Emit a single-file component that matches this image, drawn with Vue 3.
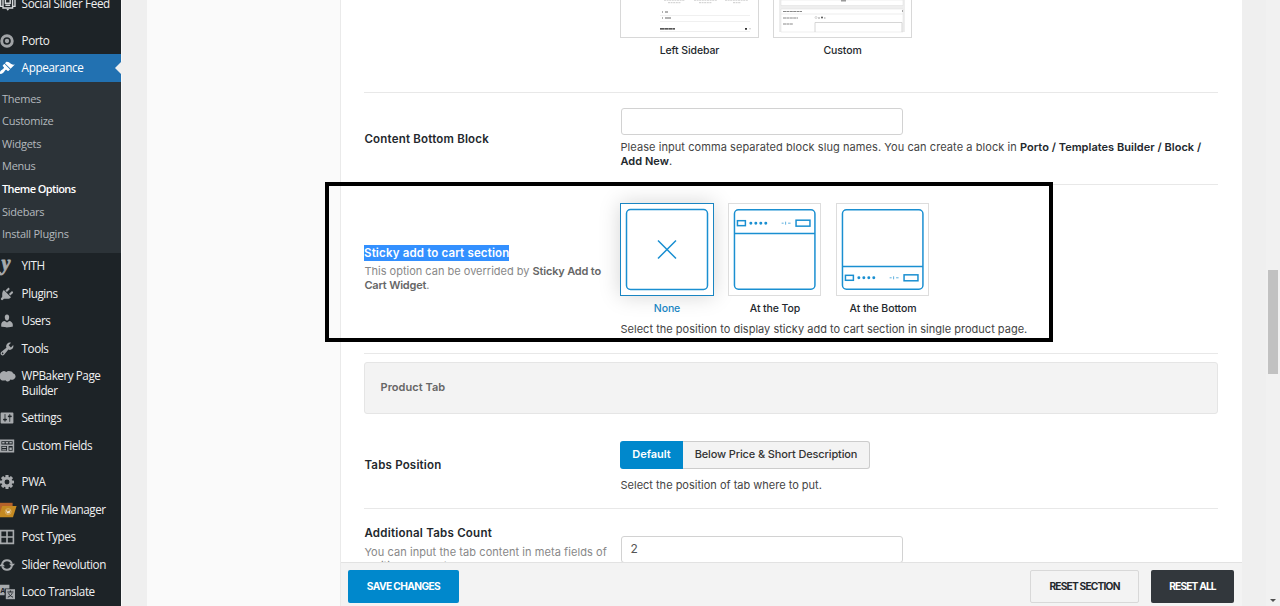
<script setup>
const P = {
  brush: 'M14.48 11.06L7.41 3.99l1.5-1.5c.5-.56 2.3-.47 3.51.32 1.21.8 1.43 1.28 2.91 2.1 1.18.64 2.45 1.26 4.45.85zm-.71.71L6.7 4.7 4.93 6.47c-.39.39-.39 1.02 0 1.41l1.06 1.06c.39.39.39 1.03 0 1.42-.6.6-1.43 1.11-2.21 1.69-.35.26-.7.53-1.01.84C1.43 14.23.4 16.08 1.4 17.07c.99 1 2.84-.03 4.18-1.36.31-.31.58-.66.85-1.02.57-.78 1.08-1.61 1.69-2.21.39-.39 1.02-.39 1.41 0l1.06 1.06c.39.39 1.02.39 1.41 0z',
  plug: 'M13.11 4.36L9.87 7.6 8 5.73l3.24-3.24c.35-.34 1.05-.2 1.56.32.52.51.66 1.21.31 1.55zm-8 1.77l.91-1.12 9.01 9.01-1.19.84c-.71.71-2.63 1.16-3.82 1.16H6.14L4.9 17.26c-.59.59-1.54.59-2.12 0-.59-.58-.59-1.53 0-2.12l1.24-1.24v-3.88c0-1.13.4-3.19 1.09-3.89zm7.26 3.97l3.24-3.24c.34-.35 1.04-.21 1.55.31.52.51.66 1.21.31 1.55l-3.24 3.25z',
  user: 'M10 9.25c-2.27 0-2.73-3.44-2.73-3.44C7 4.02 7.82 2 9.97 2c2.16 0 2.98 2.02 2.71 3.81 0 0-.41 3.44-2.68 3.44zm0 2.57L12.72 10c2.39 0 4.52 2.33 4.52 4.53v2.49s-3.65 1.13-7.24 1.13c-3.65 0-7.24-1.13-7.24-1.13v-2.49c0-2.25 1.94-4.48 4.47-4.48z',
  wrench: 'M16.68 9.77c-1.34 1.34-3.3 1.67-4.95.99l-5.41 6.52c-.99.99-2.59.99-3.58 0s-.99-2.59 0-3.57l6.52-5.42c-.68-1.65-.35-3.61.99-4.95 1.28-1.28 3.12-1.62 4.72-1.06l-2.89 2.89 2.82 2.82 2.86-2.87c.53 1.58.18 3.39-1.08 4.65zM3.81 16.21c.4.39 1.04.39 1.43 0 .4-.4.4-1.04 0-1.43-.39-.4-1.03-.4-1.43 0-.39.39-.39 1.03 0 1.43z',
  sliders: 'M18 16V4c0-.55-.45-1-1-1H3c-.55 0-1 .45-1 1v12c0 .55.45 1 1 1h14c.55 0 1-.45 1-1zM8 11h1c.55 0 1 .45 1 1s-.45 1-1 1H8v1.5c0 .28-.22.5-.5.5s-.5-.22-.5-.5V13H6c-.55 0-1-.45-1-1s.45-1 1-1h1V5.5c0-.28.22-.5.5-.5s.5.22.5.5V11zm5-2h-1c-.55 0-1-.45-1-1s.45-1 1-1h1V5.5c0-.28.22-.5.5-.5s.5.22.5.5V7h1c.55 0 1 .45 1 1s-.45 1-1 1h-1v5.5c0 .28-.22.5-.5.5s-.5-.22-.5-.5V9z',
  clouds: 'M1 8a5 5 0 0 1 8-3 5 5 0 0 1 5-1c2 0 3 1 3.500 2.500a4 4 0 0 1 1 7.500c-1.500 1-3 1-4.500 .5-.5 2.500-4 3.500-6 .8C4 16.500 2 15 1.500 13.500-.8 12-.6 9.500 1 8z',
  fields: 'M1 2h18v16H1zM3 4v4h14V4zM3 10v6h7v-6zM12 10v6h5v-6z M4 5h3v2H4z M8.500 5h3v2h-3z M13 5h3v2h-3z M4 11h5v1.500H4z M4 14h5v1.200H4z M13 12h3v3h-3z',
  grid: 'M1 1h18v18H1zM3 3v6h6V3zM11 3v6h6V3zM3 11v6h6v-6zM11 11v6h6v-6z',
}
const items = [
  { t: 'YITH', k: 'yith' }, { t: 'Plugins', k: 'plug' }, { t: 'Users', k: 'user' }, { t: 'Tools', k: 'wrench' },
  { t: 'WPBakery Page Builder', k: 'clouds', c: 'tall' }, { t: 'Settings', k: 'sliders' }, { t: 'Custom Fields', k: 'fields' },
  { t: 'PWA', k: 'gear', c: 'gap' }, { t: 'WP File Manager', k: 'folder' }, { t: 'Post Types', k: 'grid' },
  { t: 'Slider Revolution', k: 'refresh' }, { t: 'Loco Translate', k: 'loco' },
]
const sub = ['Themes', 'Customize', 'Widgets', 'Menus', 'Theme Options', 'Sidebars', 'Install Plugins']
const teeth = [0, 45, 90, 135, 180, 225, 270, 315]
</script>

<template>
  <div class="page">
    <nav class="side">
      <div class="item first">
        <svg class="ic" viewBox="0 0 20 20" fill="none" stroke="#d5d8da" stroke-width="1.700"><path d="M5 1v14h12V1M2 3v10h3M20 3v10h-3M8 1v8h6V1M8 11.500h6" /><path d="M9 16l2 2.500 2-2.500z" fill="#d5d8da" stroke="none" /></svg>
        <span>Social Slider Feed</span>
      </div>
      <div class="item porto">
        <svg class="ic" viewBox="0 0 20 20" fill="none" stroke="#a0a3a6"><circle cx="10" cy="10" r="6.600" stroke-width="3.600" /><circle cx="10" cy="10" r="2.700" fill="#a0a3a6" stroke="none" /></svg>
        <span>Porto</span>
      </div>
      <div class="item active">
        <svg class="ic" viewBox="0 0 20 20" fill="#fff"><path :d="P.brush" /></svg>
        <span>Appearance</span>
      </div>
      <ul class="sub"><li v-for="s in sub" :key="s" :class="{ cur: s === 'Theme Options' }">{{ s }}</li></ul>
      <div v-for="i in items" :key="i.t" class="item" :class="i.c">
        <svg class="ic" viewBox="0 0 20 20" fill="#a7aaad" fill-rule="evenodd">
          <text v-if="i.k === 'yith'" x="3" y="15" class="yglyph">y</text>
          <g v-else-if="i.k === 'gear'">
            <rect v-for="a in teeth" :key="a" x="8" y="1.200" width="4" height="5" rx=".6" :transform="`rotate(${a} 10 10)`" />
            <circle cx="10" cy="10" r="4.800" fill="none" stroke="#a7aaad" stroke-width="3.400" />
          </g>
          <g v-else-if="i.k === 'folder'">
            <path d="M0 1h17v17H0z" fill="#b5622a" /><path d="M4 5h18l-4.500 14H0v-2z" fill="#c58a22" />
            <circle cx="11.500" cy="12" r="3.800" fill="#c99335" stroke="#dfb878" stroke-width=".8" />
            <path d="M9.300 10.500l1.400 3.500 .8-2.500 .9 2.500 1.400-3.500" fill="none" stroke="#fff" stroke-width=".9" />
          </g>
          <g v-else-if="i.k === 'refresh'" fill="none" stroke="#a7aaad" stroke-width="2.600">
            <path d="M4 8.500a6.300 6.300 0 0 1 12 0M16 11.500a6.300 6.300 0 0 1-12 0" />
            <path d="M12.500 8.500h7.500L16.200 12.500zM7.500 11.500H0L3.800 7.500z" fill="#a7aaad" stroke="none" />
          </g>
          <g v-else-if="i.k === 'loco'">
            <path d="M0 1h13v4.500H7V14H0z" /><text x="1.500" y="11" class="la">A</text>
            <rect x="8.500" y="6.500" width="11.500" height="12.500" />
            <path d="M10.500 10H18M14.200 8v2M12 11.500c1 2.500 3 4 5.500 5M16.500 11.500c-1 2.500-3 4-5.500 5" fill="none" stroke="#1d2327" stroke-width="1.200" />
          </g>
          <path v-else :d="P[i.k]" />
        </svg>
        <span>{{ i.t }}</span>
      </div>
    </nav>
    <div class="gutter"></div>
    <div class="tabscol"></div>

    <main class="main">
      <div class="fields">
        <section class="row r1">
          <div></div>
          <div class="layouts">
            <figure>
              <div class="shot">
                <svg width="137" height="38" viewBox="0 0 137 38">
                  <g stroke="#ccc" stroke-dasharray="2 .6"><path d="M43 .2h21M73 .2h23M104 .2h23" /><path d="M47 2.700h13M78 2.700h13M112 2.700h8" /></g>
                  <path d="M39 15.500h90M39 21.500h90" stroke="#f0f0f0" />
                  <path d="M41 12h1m2 0h3M41 18h1m2 0h6" stroke="#666" stroke-width="1.100" />
                  <path d="M39 28.800h15" stroke="#222" stroke-width="1.300" stroke-dasharray="4 .3" /><path d="M39 31.500h90" stroke="#eee" />
                  <path d="M124 28.800h2" stroke="#333" stroke-width="1.800" /><path d="M128 28.800h2" stroke="#ccc" />
                </svg>
              </div>
              <figcaption>Left Sidebar</figcaption>
            </figure>
            <figure>
              <div class="shot">
                <svg width="137" height="38" viewBox="0 0 137 38">
                  <path d="M5 0h126v32H5z" fill="#eee" /><path d="M7 0h122v5.500H7zM7 9h122v23H7z" fill="#fff" stroke="#ddd" stroke-width=".5" />
                  <path d="M67 .7h5" stroke="#999" stroke-width="1.600" /><path d="M7 14h122" stroke="#e5e5e5" stroke-width=".7" />
                  <path d="M9 11.500h19M9 18h15M9 24h10" stroke="#888" stroke-width="1" stroke-dasharray="3 .4" /><path d="M128 11h1" stroke="#555" />
                  <circle cx="42" cy="17.500" r="1" fill="none" stroke="#aaa" stroke-width=".5" /><circle cx="48" cy="17.500" r="1" fill="#555" /><path d="M44 18h2m4 0h1.500" stroke="#999" />
                  <path d="M41 32v-9.500h87V32" fill="none" stroke="#ccc" stroke-width=".8" />
                </svg>
              </div>
              <figcaption>Custom</figcaption>
            </figure>
          </div>
        </section>

        <section class="row r2">
          <h4 class="a">Content Bottom Block</h4>
          <div>
            <div class="input"></div>
            <p class="help">Please input comma separated block slug names. You can create a block in <b>Porto / Templates Builder / Block /</b><br><b>Add New</b>.</p>
          </div>
        </section>

        <section class="row r3">
          <div class="lab">
            <h4><mark>Sticky add to cart section</mark></h4>
            <p class="desc">This option can be overrided by <b>Sticky Add to<br>Cart Widget</b>.</p>
          </div>
          <div>
            <div class="cards">
              <figure class="card on">
                <svg viewBox="0 0 92 91"><rect x="5.500" y="5.500" width="81" height="80" rx="4" /><path d="M37 36.500l18 18M55 36.500l-18 18" /></svg>
                <figcaption>None</figcaption>
              </figure>
              <figure class="card">
                <svg viewBox="0 0 92 91">
                  <rect x="5.500" y="5.500" width="81" height="80" rx="4" /><path d="M5.500 29.500h81" />
                  <g><rect x="8.500" y="16.500" width="8" height="5" /><rect x="67.500" y="16" width="14" height="6" /><path class="dots" d="M22 19h15.200" /><path class="qty" d="M53 19h2M57 17.500v3M59.500 19h2.500" /></g>
                </svg>
                <figcaption>At the Top</figcaption>
              </figure>
              <figure class="card">
                <svg viewBox="0 0 92 91">
                  <rect x="5.500" y="5.500" width="81" height="80" rx="4" /><path d="M5.500 62.500h81" />
                  <g transform="translate(0 55)"><rect x="8.500" y="16.500" width="8" height="5" /><rect x="67.500" y="16" width="14" height="6" /><path class="dots" d="M22 19h15.200" /><path class="qty" d="M53 19h2M57 17.500v3M59.500 19h2.500" /></g>
                </svg>
                <figcaption>At the Bottom</figcaption>
              </figure>
            </div>
            <p class="help pos">Select the position to display sticky add to cart section in single product page.</p>
          </div>
        </section>

        <div class="sect">Product Tab</div>

        <section class="row r4">
          <h4 class="a">Tabs Position</h4>
          <div>
            <div class="seg"><span class="sel">Default</span><span class="opt">Below Price &amp; Short Description</span></div>
            <p class="help tabs">Select the position of tab where to put.</p>
          </div>
        </section>

        <section class="row r5">
          <div class="lab">
            <h4>Additional Tabs Count</h4>
            <p class="desc">You can input the tab content in meta fields of<br>'editing product'.</p>
          </div>
          <div><div class="input">2</div></div>
        </section>
      </div>
      <footer class="foot">
        <button class="btn save">SAVE CHANGES</button>
        <button class="btn sec">RESET SECTION</button>
        <button class="btn all">RESET ALL</button>
      </footer>
    </main>
    <div class="right"></div>
    <div class="scroll"><i class="thumb"></i><i class="arrow"></i></div>
    <div class="frame"></div>
  </div>
</template>

<style>
body { overflow: hidden; }
</style>
<style scoped>
* { box-sizing: border-box; }
h4, p, ul, figure { margin: 0; padding: 0; }
.page { position: relative; display: flex; width: 1280px; height: 606px; overflow: hidden; background: #efefef; font: 11px/13.5px Inter, "Open Sans", sans-serif; color: #444; }
.side { width: 122px; flex: none; background: #1d2327; color: #f0f0f1; font: 11.7px/14.5px "Open Sans", "Noto Sans", sans-serif; letter-spacing: -.45px; border-right: 1px solid #f8f8f8; }
.item { display: flex; height: 27.5px; padding-top: 5.7px; }
.ic { flex: none; width: 16px; height: 16px; margin: -.2px 6.6px 0 -1px; overflow: visible; }
.first { height: 31px; padding-top: 0; margin-top: -4px; }
.porto { height: 27px; }
.active { position: relative; height: 27.5px; background: #2271b1; color: #fff; }
.active span, .first span { letter-spacing: -.35px; }
.active::after { content: ''; position: absolute; right: -1px; top: 6.500px; border: 7px solid transparent; border-left: 0; border-right-color: #efefef; }
.sub { height: 171px; padding: 6px 0 0 2px; list-style: none; background: #2c3338; color: #b4b9be; font-size: 11px; line-height: 22.65px; letter-spacing: -.25px; }
.cur { color: #fff; font-weight: 600; letter-spacing: -.6px; }
.tall { height: 42px; }
.tall span { width: 92px; }
.gap { margin-top: 9px; }
.yglyph { font: italic bold 25px "Liberation Serif", serif; stroke: #a7aaad; }
.la { font: bold 9px "Liberation Sans", sans-serif; fill: #1d2327; }
.gutter { width: 25px; flex: none; }
.tabscol { width: 193px; flex: none; background: #fafafa; }
.main { width: 902px; flex: none; display: flex; flex-direction: column; border-left: 1px solid #eaeaea; background: #fff; }
.fields { height: 562px; padding: 0 24px 0 23px; overflow: hidden; }
.row { display: grid; grid-template-columns: 256px 1fr; border-bottom: 1px solid #e8e8e8; }
.row > * { min-width: 0; }
h4 { font-size: 11.5px; line-height: 16px; font-weight: 600; letter-spacing: .2px; padding-left: .4px; color: #23282d; }
b { font-weight: 600; color: #23282d; }
.r1 { height: 93px; }
.layouts { display: flex; gap: 14px; }
.layouts figure { width: 139px; text-align: center; }
.shot { height: 38px; border: 1px solid #d8d8d8; border-top: 0; }
.shot svg { display: block; height: 38px; }
figcaption { color: #23282d; font-size: 10.5px; font-weight: 500; letter-spacing: -.1px; margin-top: 6px; }
.r2 { height: 92px; padding-top: 15px; }
.r2 .a { margin-top: 22.5px; }
.input { width: 282px; height: 27px; margin-left: 1px; border: 1px solid #d2d2d2; border-radius: 3px; padding: 0 8.5px; font-size: 12px; line-height: 25px; color: #555; }
.help { margin-top: 6px; padding-left: .5px; white-space: nowrap; letter-spacing: .07px; }
.r2 b { letter-spacing: .03px; }
.r3 { height: 169px; padding-top: 18px; }
.r3 .lab { padding-top: 42px; }
.r3 h4 { padding-left: 0; letter-spacing: .16px; }
mark { background: #3390ff; color: #fff; padding: 1px 0; }
.desc { color: #888; margin-top: 4px; padding-left: .4px; white-space: nowrap; line-height: 13.8px; letter-spacing: 0; }
.desc b { color: #666; letter-spacing: -.18px; }
.cards { display: flex; gap: 14px; }
.card { width: 94px; text-align: center; }
.card svg { display: block; width: 93.4px; height: 93px; border: 1px solid #ddd; fill: none; stroke: #1a8fd1; stroke-width: 1.500; background: #fff; }
.card figcaption { margin-top: 6.4px; }
.card.on svg { border-color: #1a85c2; width: 94px; box-shadow: 0 0 20px rgba(0, 0, 0, .17); }
.card.on figcaption { color: #1a85c2; }
.card .dots { stroke-width: 3; stroke-linecap: round; stroke-dasharray: .01 5; }
.card .qty { stroke-width: .7; }
.pos { margin-top: 7.2px; letter-spacing: .015px; }
.sect { height: 52px; margin-top: 8px; padding: 0 15.5px; border: 1px solid #e5e5e5; border-radius: 3px; background: #f3f3f3; color: #666; font-size: 11px; font-weight: 600; line-height: 49px; letter-spacing: .05px; }
.r4 { height: 95px; padding-top: 27px; }
.r4 .a { margin-top: 16px; }
.seg { display: flex; height: 27.5px; font-weight: 500; line-height: 26px; font-size: 11px; text-align: center; }
.sel { width: 63px; background: #08c; color: #fff; border-radius: 3px 0 0 3px; font-weight: 600; }
.opt { width: 187px; background: #f3f3f3; color: #333; border: 1px solid #ccc; border-left: 0; border-radius: 0 3px 3px 0; line-height: 25px; letter-spacing: -.14px; }
.tabs { margin-top: 10.8px; letter-spacing: 0; }
.r5 { height: 80px; padding-top: 16px; border: 0; }
.r5 h4 { letter-spacing: .24px; }
.r5 .desc { margin-top: 5px; letter-spacing: .07px; }
.r5 .input { margin-top: 11px; line-height: 24.5px; }
.foot { height: 44px; padding: 7px 8px 0 7px; display: flex; border-top: 1px solid #e2e2e2; background: #f3f3f3; }
.btn { height: 33px; margin: 0; padding: 0 0 1px; border: 0; border-radius: 2px; font: 700 10.2px Inter, sans-serif; letter-spacing: -.6px; color: #fff; }
.save { width: 111px; background: #08c; margin-right: auto; }
.sec { width: 109px; border: 1px solid #d8d8d8; background: #f3f3f3; color: #23282d; letter-spacing: -.8px; }
.all { width: 83px; margin-left: 12px; background: #32373c; letter-spacing: -.85px; }
.right { width: 24px; flex: none; }
.scroll { position: relative; width: 14px; flex: none; background: #f1f1f1; }
.thumb { position: absolute; left: 2px; top: 270px; width: 10px; height: 104px; background: #c1c1c1; }
.arrow { position: absolute; left: 4px; top: 599px; border: 3px solid transparent; border-bottom: 0; border-top-color: #505050; }
.frame { position: absolute; left: 325px; top: 182px; width: 728px; height: 160px; border: 4px solid #000; }
</style>
